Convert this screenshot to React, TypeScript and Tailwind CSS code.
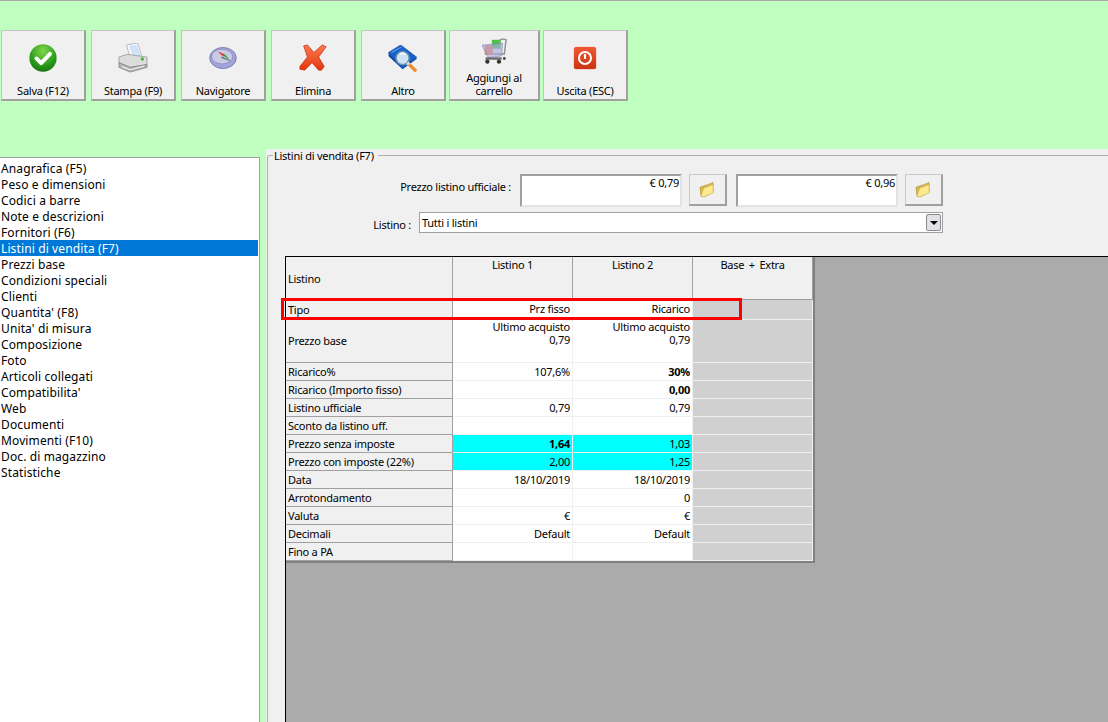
import React from "react";

const Check = () => (
  <svg width="28" height="28" viewBox="0 0 30 30">
    <defs>
      <radialGradient id="gc" cx="50%" cy="25%" r="80%">
        <stop offset="0" stopColor="#7fd84a" />
        <stop offset="0.6" stopColor="#2f9e1e" />
        <stop offset="1" stopColor="#11730f" />
      </radialGradient>
    </defs>
    <circle cx="15" cy="15" r="14.6" fill="url(#gc)" />
    <path d="M8 15.5l5 5 9.5-10" fill="none" stroke="#fff" strokeWidth="4.2" strokeLinecap="round" strokeLinejoin="round" />
  </svg>
);

const Printer = () => (
  <svg width="30" height="30" viewBox="0 0 32 32">
    <path d="M9 2l12-2 4 13-12 3z" fill="#f6f8fb" stroke="#9aa0a8" strokeWidth="0.7" />
    <path d="M12 3l8-1 4 11-8 2z" fill="#cfe2f7" />
    <path d="M1 15l9-3 6 1 15 2v8L13 26 1 21z" fill="#dcdcdc" stroke="#8a8a8a" strokeWidth="0.7" />
    <path d="M1 21l12 5 18-3v3l-18 5-12-5z" fill="#b4b4b4" stroke="#777" strokeWidth="0.7" />
    <path d="M4 25l9 3.5 15-4" fill="none" stroke="#f4f4f4" strokeWidth="1.2" />
    <circle cx="26" cy="17" r="1.8" fill="#46b83c" />
  </svg>
);

const Compass = () => (
  <svg width="30" height="22" viewBox="0 0 30 24">
    <ellipse cx="15" cy="12" rx="14.5" ry="11.5" fill="#a4a4dc" stroke="#6a6aa4" strokeWidth="0.8" />
    <ellipse cx="14" cy="10.5" rx="11.5" ry="8" fill="#c9cbe6" stroke="#8080b4" strokeWidth="0.7" />
    <path d="M9 5l6 5 2-2z" fill="#d93a28" />
    <path d="M15 9l9 7-7-8z" fill="#2f9e3a" />
    <path d="M14 10l-1 2 11 4z" fill="#66707c" />
  </svg>
);

const Cross = () => (
  <svg width="28" height="28" viewBox="0 0 30 30">
    <defs>
      <linearGradient id="xg" x1="0" y1="0" x2="0" y2="1">
        <stop offset="0" stopColor="#ff7a50" />
        <stop offset="1" stopColor="#e3360f" />
      </linearGradient>
    </defs>
    <path d="M5 2l4-1 7 8 9-8 4 2-8 11 6 10-3 4-3 0-7-8-8 8-5-1 0-3 8-10z" fill="url(#xg)" stroke="#c72b0a" strokeWidth="0.8" strokeLinejoin="round" />
  </svg>
);

const BookSearch = () => (
  <svg width="31" height="28" viewBox="0 0 32 30">
    <path d="M0 8L13 0l17 13-15 11z" fill="#1763c9" stroke="#0c3f94" strokeWidth="0.7" />
    <path d="M0 8v4l15 14 15-11v-2L15 24z" fill="#0d4aa6" />
    <path d="M3 8L14 2" stroke="#5aa0ee" strokeWidth="1.2" />
    <circle cx="15" cy="14" r="7" fill="#cfe4f3" stroke="#6d93b0" strokeWidth="1.6" />
    <path d="M12 10a5 5 0 0 1 6 0" stroke="#fff" strokeWidth="1.5" fill="none" />
    <path d="M21.5 20.5l7 6.5" stroke="#f08a2a" strokeWidth="3.6" strokeLinecap="round" />
    <path d="M20 19l2 2" stroke="#d8d8d8" strokeWidth="3.6" />
  </svg>
);

const Cart = () => (
  <svg width="25" height="29" viewBox="0 0 28 30">
    <path d="M19 4l4-2 4 1-2 16H6" fill="none" stroke="#8f8f8f" strokeWidth="1.6" />
    <rect x="11" y="3" width="10" height="10" fill="#4fc24a" />
    <rect x="3" y="9" width="9" height="11" fill="#f08a50" />
    <path d="M0 9l23-2-1 14-15 2z" fill="#a9a9e0" fillOpacity="0.62" stroke="#8080b8" strokeWidth="0.7" />
    <path d="M4 24h18" stroke="#666" strokeWidth="2.6" />
    <circle cx="6" cy="27.5" r="2.4" fill="#333" />
    <circle cx="19" cy="27.5" r="2.4" fill="#333" />
    <circle cx="25" cy="24" r="1.6" fill="#444" />
  </svg>
);

const Power = () => (
  <svg width="24" height="24" viewBox="0 0 24 24">
    <defs>
      <linearGradient id="pg" x1="0" y1="0" x2="0" y2="1">
        <stop offset="0" stopColor="#ef5a34" />
        <stop offset="1" stopColor="#c8320e" />
      </linearGradient>
    </defs>
    <rect x="0.5" y="0.5" width="23" height="23" rx="2.5" fill="url(#pg)" stroke="#fff" strokeWidth="0.6" />
    <circle cx="12" cy="12" r="6" fill="none" stroke="#fff" strokeWidth="2" />
    <path d="M12 8v5" stroke="#fff" strokeWidth="2.2" />
  </svg>
);

const Folder = () => (
  <svg width="15" height="16" viewBox="0 0 16 16">
    <path d="M1 5l9-3 5-2v10l-9 5-4-1z" fill="#d8b850" stroke="#a88a35" strokeWidth="0.6" />
    <path d="M5 6l10-4v9l-9 4H2z" fill="#ffe98f" stroke="#c4a548" strokeWidth="0.6" />
  </svg>
);

const tools = [
  { w: "w-[85px]", icon: <Check />, label: "Salva (F12)", gap: "mb-[12px]" },
  { w: "w-[85px]", icon: <Printer />, label: "Stampa (F9)", gap: "mb-[11px]" },
  { w: "w-[85px]", icon: <Compass />, label: "Navigatore", gap: "mb-[15px]" },
  { w: "w-[85px]", icon: <Cross />, label: "Elimina", gap: "mb-[12px]" },
  { w: "w-[85px]", icon: <BookSearch />, label: "Altro", gap: "mb-[11px]" },
  { w: "w-[91px]", icon: <Cart />, label: "Aggiungi al carrello", gap: "mb-[6px]" },
  { w: "w-[85px]", icon: <Power />, label: "Uscita (ESC)", gap: "mb-[14px]" },
];

const menu = [
  "Anagrafica (F5)", "Peso e dimensioni", "Codici a barre", "Note e descrizioni", "Fornitori (F6)",
  "Listini di vendita (F7)", "Prezzi base", "Condizioni speciali", "Clienti", "Quantita' (F8)",
  "Unita' di misura", "Composizione", "Foto", "Articoli collegati", "Compatibilita'", "Web",
  "Documenti", "Movimenti (F10)", "Doc. di magazzino", "Statistiche",
];

type Row = { label: string; h: string; a?: string[]; b?: string[]; ab?: boolean; bb?: boolean; cyan?: boolean; tall?: boolean };
const rows: Row[] = [
  { label: "Tipo", h: "h-[20px]", a: ["Prz fisso"], b: ["Ricarico"] },
  { label: "Prezzo base", h: "h-[43px]", a: ["Ultimo acquisto", "0,79"], b: ["Ultimo acquisto", "0,79"], tall: true },
  { label: "Ricarico%", h: "h-[18px]", a: ["107,6%"], b: ["30%"], bb: true },
  { label: "Ricarico (Importo fisso)", h: "h-[18px]", b: ["0,00"], bb: true },
  { label: "Listino ufficiale", h: "h-[18px]", a: ["0,79"], b: ["0,79"] },
  { label: "Sconto da listino uff.", h: "h-[18px]" },
  { label: "Prezzo senza imposte", h: "h-[18px]", a: ["1,64"], b: ["1,03"], ab: true, cyan: true },
  { label: "Prezzo con imposte (22%)", h: "h-[18px]", a: ["2,00"], b: ["1,25"], cyan: true },
  { label: "Data", h: "h-[18px]", a: ["18/10/2019"], b: ["18/10/2019"] },
  { label: "Arrotondamento", h: "h-[18px]", b: ["0"] },
  { label: "Valuta", h: "h-[18px]", a: ["€"], b: ["€"] },
  { label: "Decimali", h: "h-[18px]", a: ["Default"], b: ["Default"] },
  { label: "Fino a PA", h: "h-[18px]" },
];

const Cell = ({ lines, bold, cyan, tall }: { lines?: string[]; bold?: boolean; cyan?: boolean; tall?: boolean }) => (
  <div
    className={`w-[120px] shrink-0 border-r border-b border-[#f0f0f0] pr-[2px] text-right leading-[13px] ${tall ? "pt-0" : "pt-[2px]"} ${
      cyan ? "bg-[#00ffff]" : "bg-white"
    } ${bold ? "font-bold" : ""}`}
  >
    {lines?.map((l) => (
      <div key={l}>{l}</div>
    ))}
  </div>
);

const PriceField = ({ value }: { value: string }) => (
  <div className="w-[162px] h-[33px] border-2 border-t-[#a0a0a0] border-l-[#a0a0a0] border-r-[#e3e3e3] border-b-[#e3e3e3] bg-white text-right pr-[1px] leading-[13px]">
    {value}
  </div>
);

const FolderButton = () => (
  <div className="w-[38px] h-[32px] ml-[7px] mr-[9px] pr-[3px] bg-[#f0f0f0] border border-[#c8c8c8] border-r-2 border-b-2 border-r-[#a0a0a0] border-b-[#a0a0a0] flex items-center justify-center">
    <Folder />
  </div>
);

export default function App() {
  return (
    <div
      className="w-[1108px] h-[722px] overflow-hidden flex flex-col bg-[#c0ffc0] border-t border-[#a8a8a8] text-[11px] tracking-[-0.25px] text-black"
      style={{ fontFamily: '"Noto Sans", sans-serif' }}
    >
      <div className="h-[148px] shrink-0 flex items-start gap-[5px] pl-[1px] pt-[29px]">
        {tools.map((t, i) => (
          <div
            key={t.label}
            className={`${t.w} ${i === 5 ? "-mx-[2px]" : ""} h-[71px] shrink-0 flex flex-col items-center justify-end pb-[2px] bg-[#f0f0f0] border border-[#c4c4c4] border-r-2 border-b-2 border-r-[#a0a0a0] border-b-[#a0a0a0] text-center leading-[13px]`}
          >
            <div className={`${t.gap} flex justify-center`}>{t.icon}</div>
            <div className="max-w-[70px]">{t.label}</div>
          </div>
        ))}
      </div>
      <div className="flex-1 flex min-h-0">
        <div className="w-[260px] shrink-0 mt-[8px] bg-white border-t border-r border-[#a0a0a0] pt-[2px] pr-[1px] text-[12px] tracking-[0.12px]">
          {menu.map((m) => (
            <div
              key={m}
              className={`h-[16px] leading-[18px] pl-[1px] whitespace-nowrap ${
                m.startsWith("Listini") ? "bg-[#0078d7] text-white" : ""
              }`}
            >
              {m}
            </div>
          ))}
        </div>
        <div className="ml-[6px] flex-1 min-w-0 bg-[#f0f0f0] pl-[1px] pt-[6px]">
          <div className="h-full flex flex-col border-t border-l border-[#b0b0b0] rounded-tl-[3px] relative">
            <div className="absolute -top-[7px] left-[5px] bg-[#f0f0f0] pr-[4px] pl-[1px] leading-[13px]">
              Listini di vendita (F7)
            </div>
            <div className="flex items-start pt-[18px]">
              <div className="w-[252px] shrink-0 pr-[9px] text-right pt-[6px] leading-[13px] whitespace-nowrap">Prezzo listino ufficiale :</div>
              <PriceField value="€ 0,79" />
              <FolderButton />
              <PriceField value="€ 0,96" />
              <FolderButton />
            </div>
            <div className="flex items-center mt-[5px]">
              <div className="w-[151px] shrink-0 text-right pr-[8px] leading-[13px] pt-[3px]">Listino :</div>
              <div className="w-[524px] h-[21px] bg-white border border-[#a0a0a0] flex items-center justify-between pl-[2px] pr-[1px]">
                <span className="leading-[13px]">Tutti i listini</span>
                <div className="w-[15px] h-[17px] bg-[#e1e1e8] border border-[#8a8a8a] rounded-[2px] flex items-center justify-center">
                  <div className="w-0 h-0 border-l-[4px] border-r-[4px] border-t-[4px] border-l-transparent border-r-transparent border-t-black" />
                </div>
              </div>
            </div>
            <div className="flex-1 min-h-0 mt-[23px] ml-[17px] bg-[#ababab] border-t border-l border-black">
              <div className="w-[529px] border-r-2 border-b-2 border-[#808080]">
                <div className="flex h-[43px]">
                  <div className="w-[167px] shrink-0 bg-[#f0f0f0] border-r border-b border-[#a0a0a0] pl-[2px] flex items-center leading-[13px]">
                    Listino
                  </div>
                  {["Listino 1", "Listino 2", "Base + Extra"].map((h) => (
                    <div
                      key={h}
                      className={`w-[120px] shrink-0 bg-[#f0f0f0] border-r border-b border-[#a0a0a0] text-center leading-[13px] pt-[1px] ${h.startsWith("Base") ? "[word-spacing:2px]" : ""}`}
                    >
                      {h}
                    </div>
                  ))}
                </div>
                {rows.map((r) => (
                  <div key={r.label} className={`flex ${r.h}`}>
                    <div className={`w-[167px] shrink-0 bg-[#f0f0f0] border-r border-b border-[#a0a0a0] pl-[2px] flex items-center leading-[13px] whitespace-nowrap ${r.tall ? "pb-[2px]" : ""}`}>
                      {r.label}
                    </div>
                    <Cell lines={r.a} bold={r.ab} cyan={r.cyan} tall={r.tall} />
                    <Cell lines={r.b} bold={r.bb} cyan={r.cyan} tall={r.tall} />
                    <div className="w-[120px] shrink-0 bg-[#d0d0d0] border-r border-b border-[#f0f0f0]" />
                  </div>
                ))}
              </div>
            </div>
            <div className="absolute left-[13px] top-[142px] w-[461px] h-[22px] border-[3px] border-[#ff0000]" />
          </div>
        </div>
      </div>
    </div>
  );
}
